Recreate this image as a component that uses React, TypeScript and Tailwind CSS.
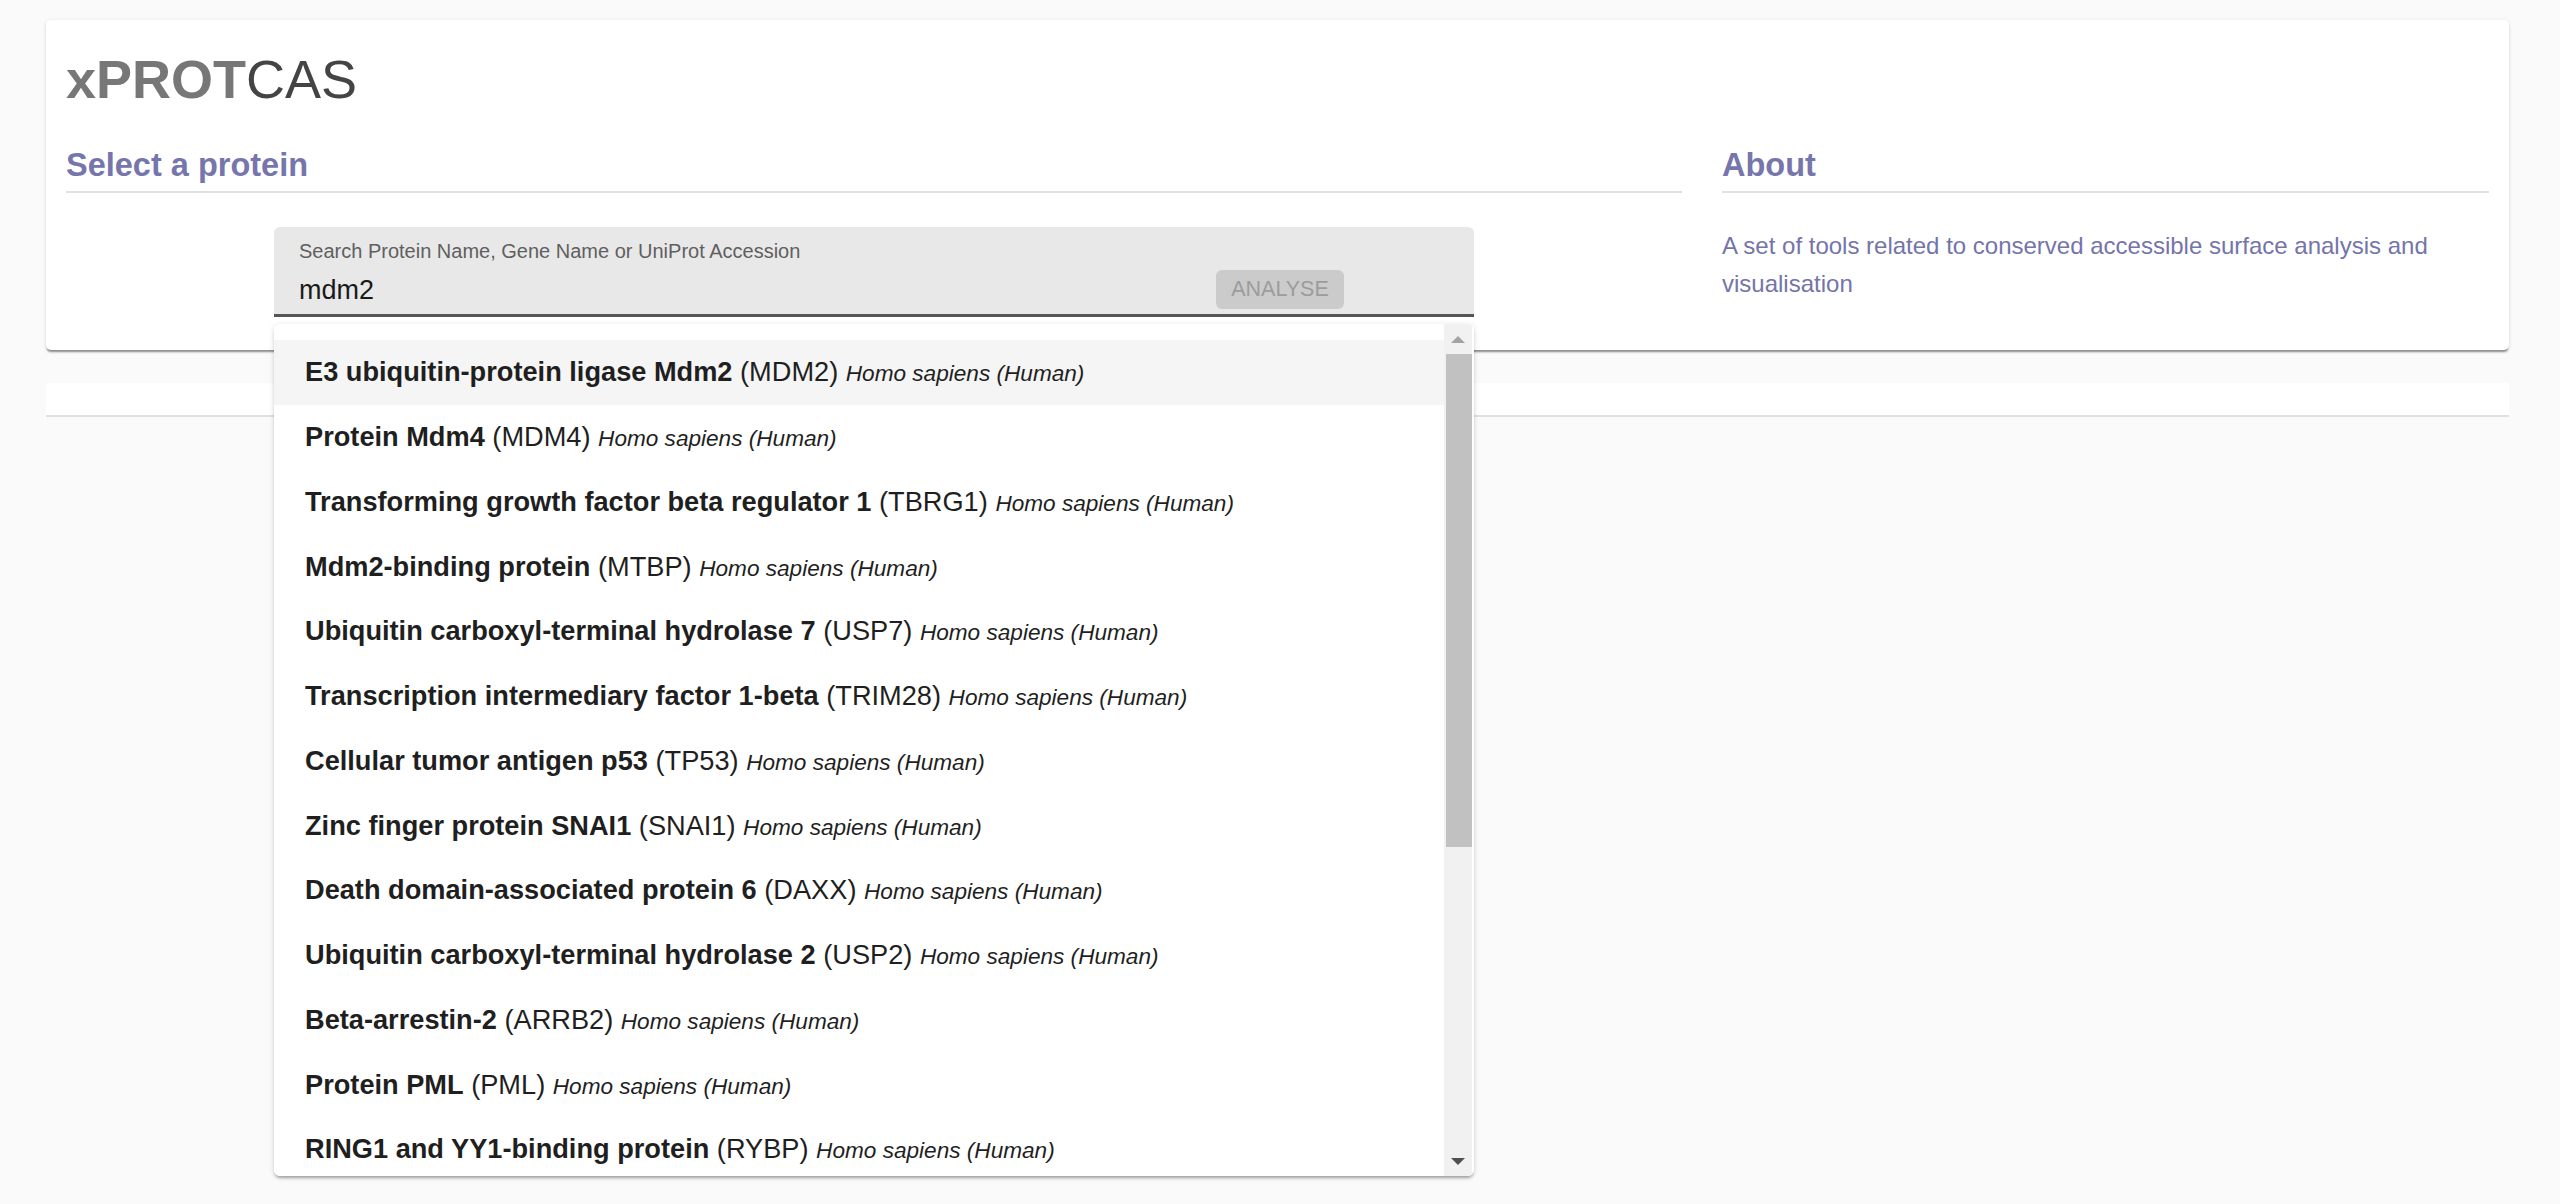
import React from "react";

const rows: [string, string][] = [
  ["E3 ubiquitin-protein ligase Mdm2", "MDM2"],
  ["Protein Mdm4", "MDM4"],
  ["Transforming growth factor beta regulator 1", "TBRG1"],
  ["Mdm2-binding protein", "MTBP"],
  ["Ubiquitin carboxyl-terminal hydrolase 7", "USP7"],
  ["Transcription intermediary factor 1-beta", "TRIM28"],
  ["Cellular tumor antigen p53", "TP53"],
  ["Zinc finger protein SNAI1", "SNAI1"],
  ["Death domain-associated protein 6", "DAXX"],
  ["Ubiquitin carboxyl-terminal hydrolase 2", "USP2"],
  ["Beta-arrestin-2", "ARRB2"],
  ["Protein PML", "PML"],
  ["RING1 and YY1-binding protein", "RYBP"],
];

export default function App() {
  return (
    <div className="min-h-screen bg-[#fafafa] pt-[20px] font-['Liberation_Sans',Arial,sans-serif]">
      <div className="ml-[46px] w-[2463px]">
        <div className="rounded-[5px] bg-white px-[20px] pt-[26px] pb-[33px] shadow-[0_3px_2px_-1px_rgba(0,0,0,0.4),0_1px_4px_0_rgba(0,0,0,0.12)]">
          <h1 className="text-[54px] leading-[67px]">
            <span className="font-bold text-[#777777]">xPROT</span>
            <span className="text-[#444444]">CAS</span>
          </h1>
          <div className="mt-[33px] grid grid-cols-[1616px_1fr] gap-x-[40px]">
            <div>
              <h2 className="border-b-2 border-[#e0e0e0] pb-[6px] text-[32.5px] font-bold leading-[39px] text-[#7676ad]">
                Select a protein
              </h2>
              <div className="mt-[34px] flex justify-center">
                <div className="relative w-[1200px]">
                  <div className="rounded-t-[6px] border-b-[3px] border-[#555555] bg-[#e8e8e8] pt-[14px] pb-[5px]">
                    <div className="pl-[25px] text-[20px] leading-[20px] text-[#5f5f5f]">
                      Search Protein Name, Gene Name or UniProt Accession
                    </div>
                    <div className="mt-[9px] flex h-[39px] items-center pl-[25px] pr-[130px]">
                      <div className="flex-1 pt-[2px] text-[27px] leading-[33px] text-[#1a1a1a]">mdm2</div>
                      <div className="flex h-[39px] w-[128px] items-center justify-center rounded-[6px] bg-[#cbcbcb] text-[21.5px] text-[#9c9c9c]">
                        ANALYSE
                      </div>
                    </div>
                  </div>
                  <div className="absolute left-0 top-[97px] z-10 flex h-[852px] w-[1200px] overflow-hidden rounded-[6px] bg-white shadow-[0_3px_3px_-1px_rgba(0,0,0,0.3),0_1px_6px_0_rgba(0,0,0,0.12)]">
                    <div className="flex-1 overflow-hidden pt-[16px]">
                      {rows.map(([name, gene], i) => (
                        <div
                          key={gene}
                          className={
                            "flex h-[64.76px] items-center whitespace-nowrap pt-[3px] pl-[31px] text-[27.2px] leading-[40.8px] text-[#1f1f1f] " +
                            (i === 0 ? "bg-[#f5f5f5]" : "bg-white")
                          }
                        >
                          <span>
                            <span className="font-bold">{name}</span> ({gene}){" "}
                            <span className="text-[22.6px] italic">Homo sapiens (Human)</span>
                          </span>
                        </div>
                      ))}
                    </div>
                    <div className="mr-[2px] flex w-[28px] flex-col bg-[#f1f1f1]">
                      <div className="flex h-[30px] items-center justify-center">
                        <svg width="16" height="9" viewBox="0 0 16 9">
                          <polygon points="8,1 15,8 1,8" fill="#a3a3a3" />
                        </svg>
                      </div>
                      <div className="ml-[2px] h-[493px] bg-[#c1c1c1]" />
                      <div className="flex-1" />
                      <div className="flex h-[30px] items-center justify-center">
                        <svg width="16" height="9" viewBox="0 0 16 9">
                          <polygon points="1,1 15,1 8,8" fill="#505050" />
                        </svg>
                      </div>
                    </div>
                  </div>
                </div>
              </div>
            </div>
            <div>
              <h2 className="border-b-2 border-[#e0e0e0] pb-[6px] text-[32.5px] font-bold leading-[39px] text-[#7676ad]">
                About
              </h2>
              <p className="mt-[34px] text-[24px] leading-[38px] text-[#7474ab]">
                A set of tools related to conserved accessible surface analysis and visualisation
              </p>
            </div>
          </div>
        </div>
        <div className="mt-[33px] h-[34px] border-b-2 border-[#e0e0e0] bg-white" />
      </div>
    </div>
  );
}
